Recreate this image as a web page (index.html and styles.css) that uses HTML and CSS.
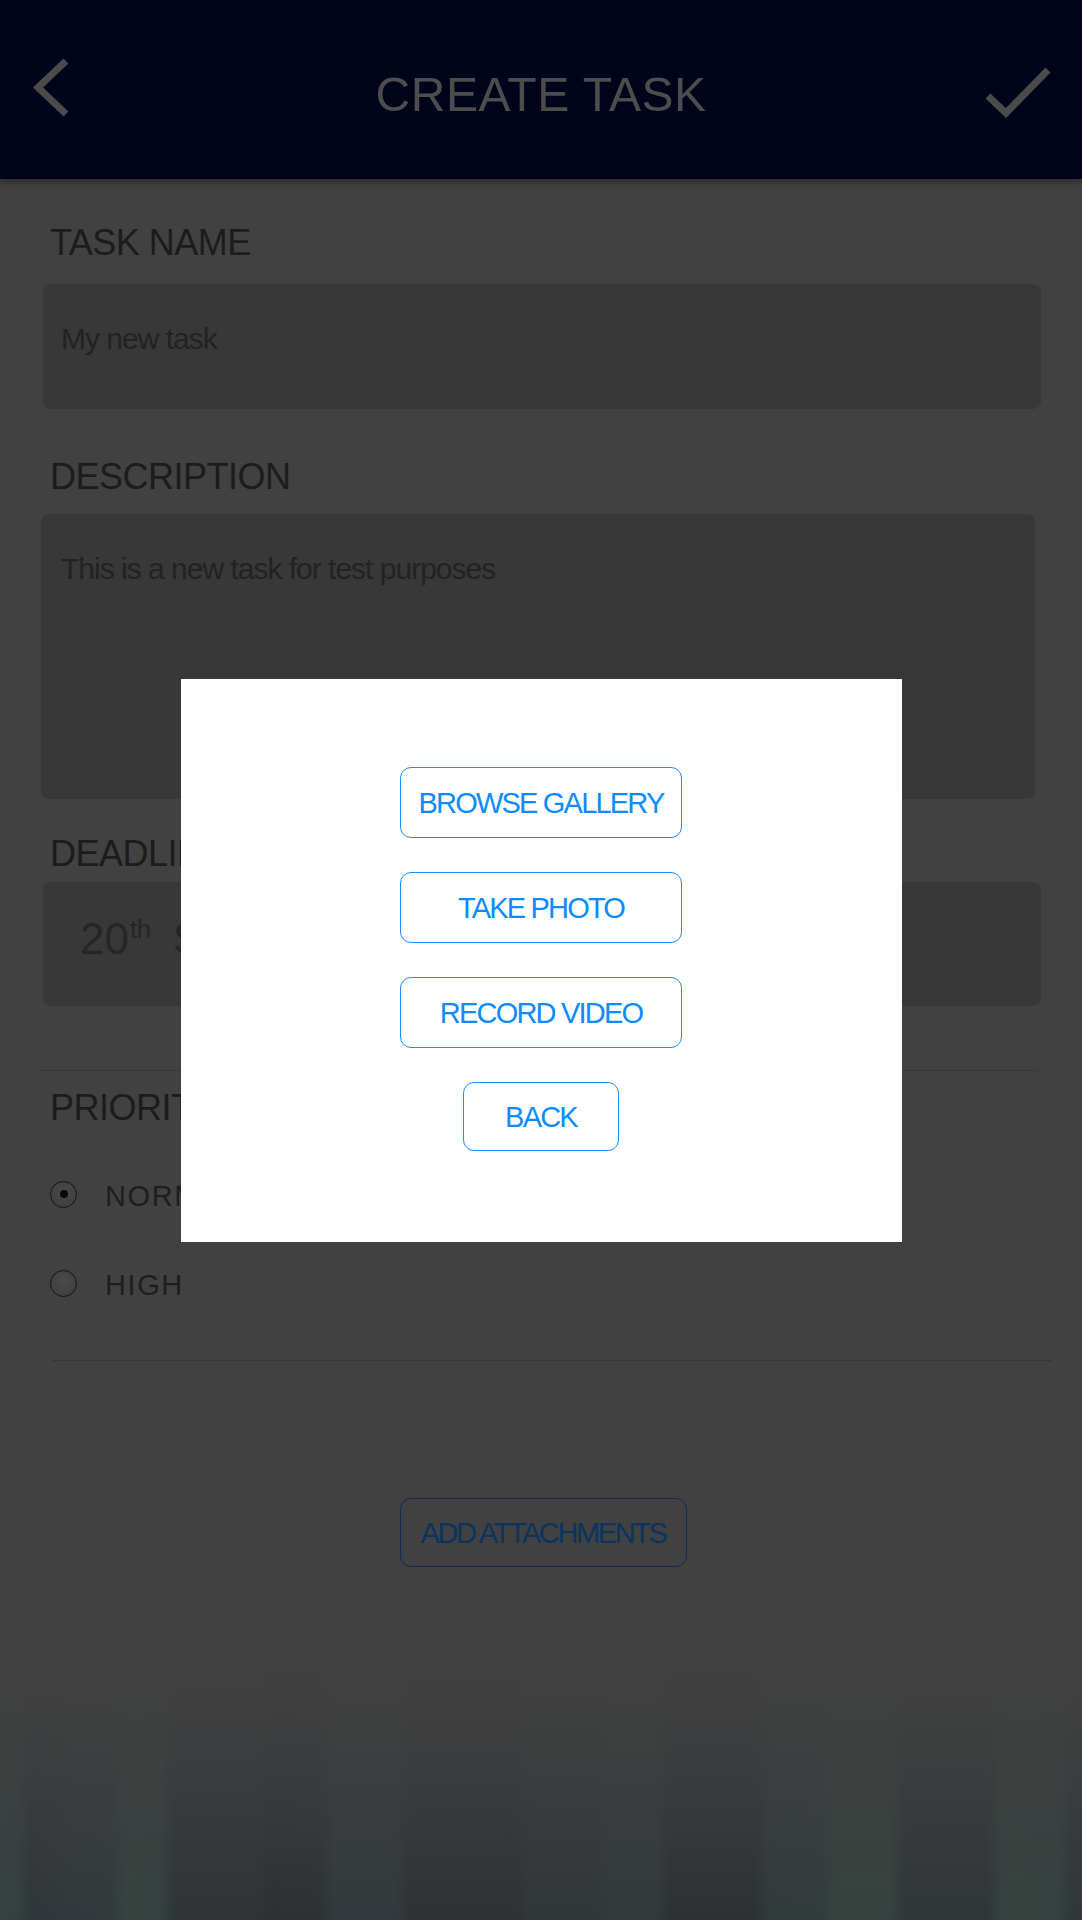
FILE: index.html
```html
<!DOCTYPE html>
<html lang="en">
<head>
<meta charset="utf-8">
<title>Create Task</title>
<link rel="stylesheet" href="styles.css">
</head>
<body>
<div class="page">
  <header class="topbar">
    <svg class="icon-back" width="50" height="76" viewBox="0 0 50 76" aria-hidden="true">
      <path d="M40 11 L12 37.5 L40 64" fill="none" stroke="#4b4b4b" stroke-width="7" stroke-linejoin="miter" stroke-linecap="butt"/>
    </svg>
    <h1 class="title">CREATE TASK</h1>
    <svg class="icon-check" width="84" height="64" viewBox="0 0 84 64" aria-hidden="true">
      <path d="M12 36 L30 53 L72 10" fill="none" stroke="#4b4b4b" stroke-width="7" stroke-linejoin="miter" stroke-linecap="butt"/>
    </svg>
  </header>

  <main class="form">
    <div class="label label-first">TASK NAME</div>
    <div class="field field-name">My new task</div>

    <div class="label label-desc">DESCRIPTION</div>
    <div class="field field-desc">This is a new task for test purposes</div>

    <div class="label label-deadline">DEADLINE</div>
    <div class="field field-date"><span class="day">20<sup>th</sup></span> <span class="month">September 2014</span></div>

    <hr class="rule rule-one">

    <div class="label label-priority">PRIORITY</div>
    <div class="radios">
      <div class="radio-row"><span class="radio checked"></span><span class="radio-text">NORMAL</span></div>
      <div class="radio-row"><span class="radio"></span><span class="radio-text">HIGH</span></div>
    </div>

    <hr class="rule rule-two">

    <div class="attach-wrap">
      <div class="btn-attach">ADD ATTACHMENTS</div>
    </div>
  </main>

  <div class="scenery"></div>
</div>

<div class="modal-layer">
  <div class="modal">
    <div class="mbtn mbtn-wide">BROWSE GALLERY</div>
    <div class="mbtn mbtn-wide">TAKE PHOTO</div>
    <div class="mbtn mbtn-wide">RECORD VIDEO</div>
    <div class="mbtn mbtn-back">BACK</div>
  </div>
</div>
</body>
</html>
```

FILE: styles.css
```css
html, body {
  margin: 0;
  padding: 0;
}
body {
  width: 1082px;
  height: 1920px;
  overflow: hidden;
  background: #414141;
  font-family: "Liberation Sans", Arial, sans-serif;
}
.page {
  display: flex;
  flex-direction: column;
  min-height: 1920px;
}
.topbar {
  height: 179px;
  background: #00041a;
  display: grid;
  grid-template-columns: 1fr auto 1fr;
  align-items: start;
  box-shadow: 0 3px 6px rgba(0, 0, 0, 0.35);
  position: relative;
  z-index: 1;
  flex: none;
}
.icon-back {
  justify-self: start;
  margin: 50px 0 0 26px;
}
.icon-check {
  justify-self: end;
  margin: 60px 22px 0 0;
}
.title {
  margin: 71px 0 0 0;
  font-size: 48px;
  line-height: 48px;
  font-weight: normal;
  color: #4d4d4d;
  letter-spacing: 0.5px;
}
.form {
  padding: 0 41px 0 43px;
  display: flex;
  flex-direction: column;
  flex: none;
}
.label {
  font-size: 36px;
  line-height: 36px;
  color: #1c1c1c;
  padding-left: 7px;
  letter-spacing: -0.5px;
}
.label-first { margin-top: 46px; margin-bottom: 23px; }
.label-desc { margin-top: 50px; margin-bottom: 19px; }
.label-deadline { margin-top: 37px; margin-bottom: 10px; }
.label-priority { margin-top: 19px; }
.field {
  background: #383838;
  border-radius: 8px;
  box-sizing: border-box;
  color: #232323;
  font-size: 30px;
  line-height: 30px;
  letter-spacing: -1px;
  padding: 40px 18px 0 18px;
}
.field-name { height: 125px; }
.field-desc {
  height: 285px;
  width: 994px;
  margin-left: -2px;
  padding-left: 20px;
}
.field-date {
  height: 124px;
  padding: 35px 0 0 37px;
  font-size: 44px;
  line-height: 44px;
  letter-spacing: 0;
  color: #262626;
}
.field-date sup {
  font-size: 26px;
  line-height: 0;
  vertical-align: 0;
  position: relative;
  top: -16px;
  margin-left: 1px;
  letter-spacing: -0.5px;
}
.month { margin-left: 10px; }
.rule {
  border: 0;
  height: 1px;
  background: #373737;
  margin: 0;
}
.rule-one { margin-top: 64px; margin-left: -3px; width: 997px; }
.rule-two { margin-top: 47px; margin-left: 9px; width: 1000px; }
.radios {
  display: flex;
  flex-direction: column;
  gap: 29px;
  padding-top: 38px;
  padding-left: 7px;
}
.radio-row {
  height: 60px;
  display: flex;
  align-items: center;
}
.radio {
  width: 27px;
  height: 27px;
  box-sizing: border-box;
  border-radius: 50%;
  border: 1.5px solid #151515;
  background: radial-gradient(circle at 50% 40%, #4a4a4a, #3c3c3c);
  display: flex;
  align-items: center;
  justify-content: center;
}
.radio.checked::after {
  content: "";
  width: 8px;
  height: 8px;
  border-radius: 50%;
  background: #080808;
}
.radio-text {
  margin-left: 28px;
  font-size: 29px;
  line-height: 29px;
  letter-spacing: 1.6px;
  color: #1e1e1e;
  position: relative;
  top: 2px;
}
.attach-wrap {
  display: flex;
  justify-content: center;
  margin-top: 137px;
  margin-right: -2px;
}
.btn-attach {
  width: 287px;
  height: 69px;
  box-sizing: border-box;
  border: 1.5px solid #0b3158;
  border-radius: 11px;
  display: flex;
  align-items: center;
  justify-content: center;
  color: #0c355e;
  font-size: 29px;
  letter-spacing: -2.4px;
  padding-top: 2px;
}
.scenery {
  flex: 1;
  background:
    linear-gradient(to bottom, #414141 0%, rgba(65, 65, 65, 0.95) 35%, rgba(62, 63, 64, 0.5) 78%, rgba(60, 62, 64, 0.12) 100%),
    linear-gradient(to right,
      #34423f 0px, #33403f 18px,
      #2e3438 30px, #2f3639 56px,
      #30383b 70px, #31393c 110px,
      #35433f 125px, #34423f 160px,
      #2d3236 175px, #2d3236 255px,
      #2a2e32 270px, #2b2f33 318px,
      #31393c 335px, #31393c 395px,
      #2c3034 410px, #2c3034 515px,
      #2f3538 530px, #2f3538 595px,
      #31393b 610px, #31393b 655px,
      #2b2f33 670px, #2b2f33 755px,
      #303a3b 770px, #313b3c 820px,
      #35433f 835px, #35433f 890px,
      #2e3437 905px, #2e3437 988px,
      #35433f 1002px, #34423f 1058px,
      #2f3538 1072px, #2f3538 1082px);
}
.modal-layer {
  position: fixed;
  inset: 0;
  display: flex;
  align-items: center;
  justify-content: center;
}
.modal {
  width: 721px;
  height: 563px;
  box-sizing: border-box;
  background: #ffffff;
  padding-top: 88px;
  display: flex;
  flex-direction: column;
  align-items: center;
  gap: 34px;
}
.mbtn {
  height: 71px;
  box-sizing: border-box;
  border: 1.5px solid #1a8cfb;
  border-radius: 11px;
  display: flex;
  align-items: center;
  justify-content: center;
  color: #0c8bff;
  font-size: 29px;
  letter-spacing: -1.8px;
  padding-top: 2px;
}
.mbtn-wide { width: 282px; }
.mbtn-back { width: 156px; height: 69px; }
```
